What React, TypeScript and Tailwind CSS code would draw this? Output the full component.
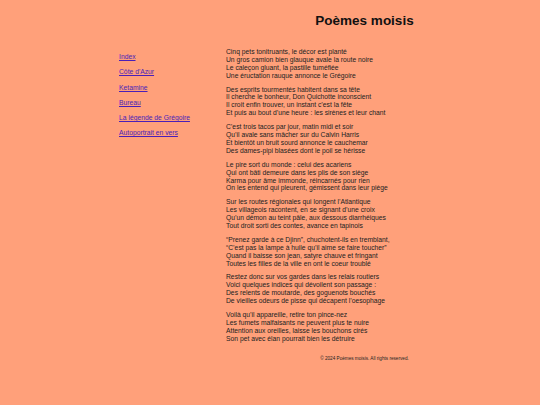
import React from "react";

const stanzas: string[][] = [
  [
    "Cinq pets tonitruants, le décor est planté",
    "Un gros camion bien glauque avale la route noire",
    "Le caleçon gluant, la pastille tuméfiée",
    "Une éructation rauque annonce le Grégoire",
  ],
  [
    "Des esprits tourmentés habitent dans sa tête",
    "Il cherche le bonheur, Don Quichotte inconscient",
    "Il croit enfin trouver, un instant c’est la fête",
    "Et puis au bout d’une heure : les sirènes et leur chant",
  ],
  [
    "C’est trois tacos par jour, matin midi et soir",
    "Qu’il avale sans mâcher sur du Calvin Harris",
    "Et bientôt un bruit sourd annonce le cauchemar",
    "Des dames-pipi blasées dont le poil se hérisse",
  ],
  [
    "Le pire sort du monde : celui des acariens",
    "Qui ont bâti demeure dans les plis de son siège",
    "Karma pour âme immonde, réincarnés pour rien",
    "On les entend qui pleurent, gémissent dans leur piège",
  ],
  [
    "Sur les routes régionales qui longent l’Atlantique",
    "Les villageois racontent, en se signant d’une croix",
    "Qu’un démon au teint pâle, aux dessous diarrhéiques",
    "Tout droit sorti des contes, avance en tapinois",
  ],
  [
    "“Prenez garde à ce Djinn”, chuchotent-ils en tremblant,",
    "“C’est pas la lampe à huile qu’il aime se faire toucher”",
    "Quand il baisse son jean, satyre chauve et fringant",
    "Toutes les filles de la ville en ont le coeur troublé",
  ],
  [
    "Restez donc sur vos gardes dans les relais routiers",
    "Voici quelques indices qui dévoilent son passage :",
    "Des relents de moutarde, des goguenots bouchés",
    "De vieilles odeurs de pisse qui décapent l’oesophage",
  ],
  [
    "Voilà qu’il appareille, retire ton pince-nez",
    "Les fumets malfaisants ne peuvent plus te nuire",
    "Attention aux oreilles, laisse les bouchons cirés",
    "Son pet avec élan pourrait bien les détruire",
  ],
];

const links = [
  "Index",
  "Côte d'Azur",
  "Ketamine",
  "Bureau",
  "La légende de Grégoire",
  "Autoportrait en vers",
];

export default function App() {
  return (
    <div className="min-h-[405px] bg-[#ffa07a] text-[#222] font-['Liberation_Sans',Arial,sans-serif]">
      <div className="flex pl-[119px]">
        <nav className="w-[107px] pt-[53px]">
          <ul className="flex flex-col gap-[7.5px]">
            {links.map((l) => (
              <li key={l} className="text-[6.75px] leading-[7.76px]">
                <a href="#" className="text-[#4a1fb8] underline">
                  {l}
                </a>
              </li>
            ))}
          </ul>
        </nav>
        <main className="w-[277px]">
          <h1 className="pt-[13px] text-center text-[13.5px] font-bold leading-[15.5px] text-[#111]">
            Poèmes moisis
          </h1>
          <div className="mt-[19.5px]">
            {stanzas.map((s, i) => (
              <p key={i} className="mb-[5.8px] text-[6.75px] leading-[7.94px]">
                {s.map((line, j) => (
                  <React.Fragment key={j}>
                    {line}
                    {j < s.length - 1 && <br />}
                  </React.Fragment>
                ))}
              </p>
            ))}
          </div>
          <footer className="mt-[13px] text-center text-[4.65px] leading-[5.35px]">
            © 2024 Poèmes moisis. All rights reserved.
          </footer>
        </main>
      </div>
    </div>
  );
}
